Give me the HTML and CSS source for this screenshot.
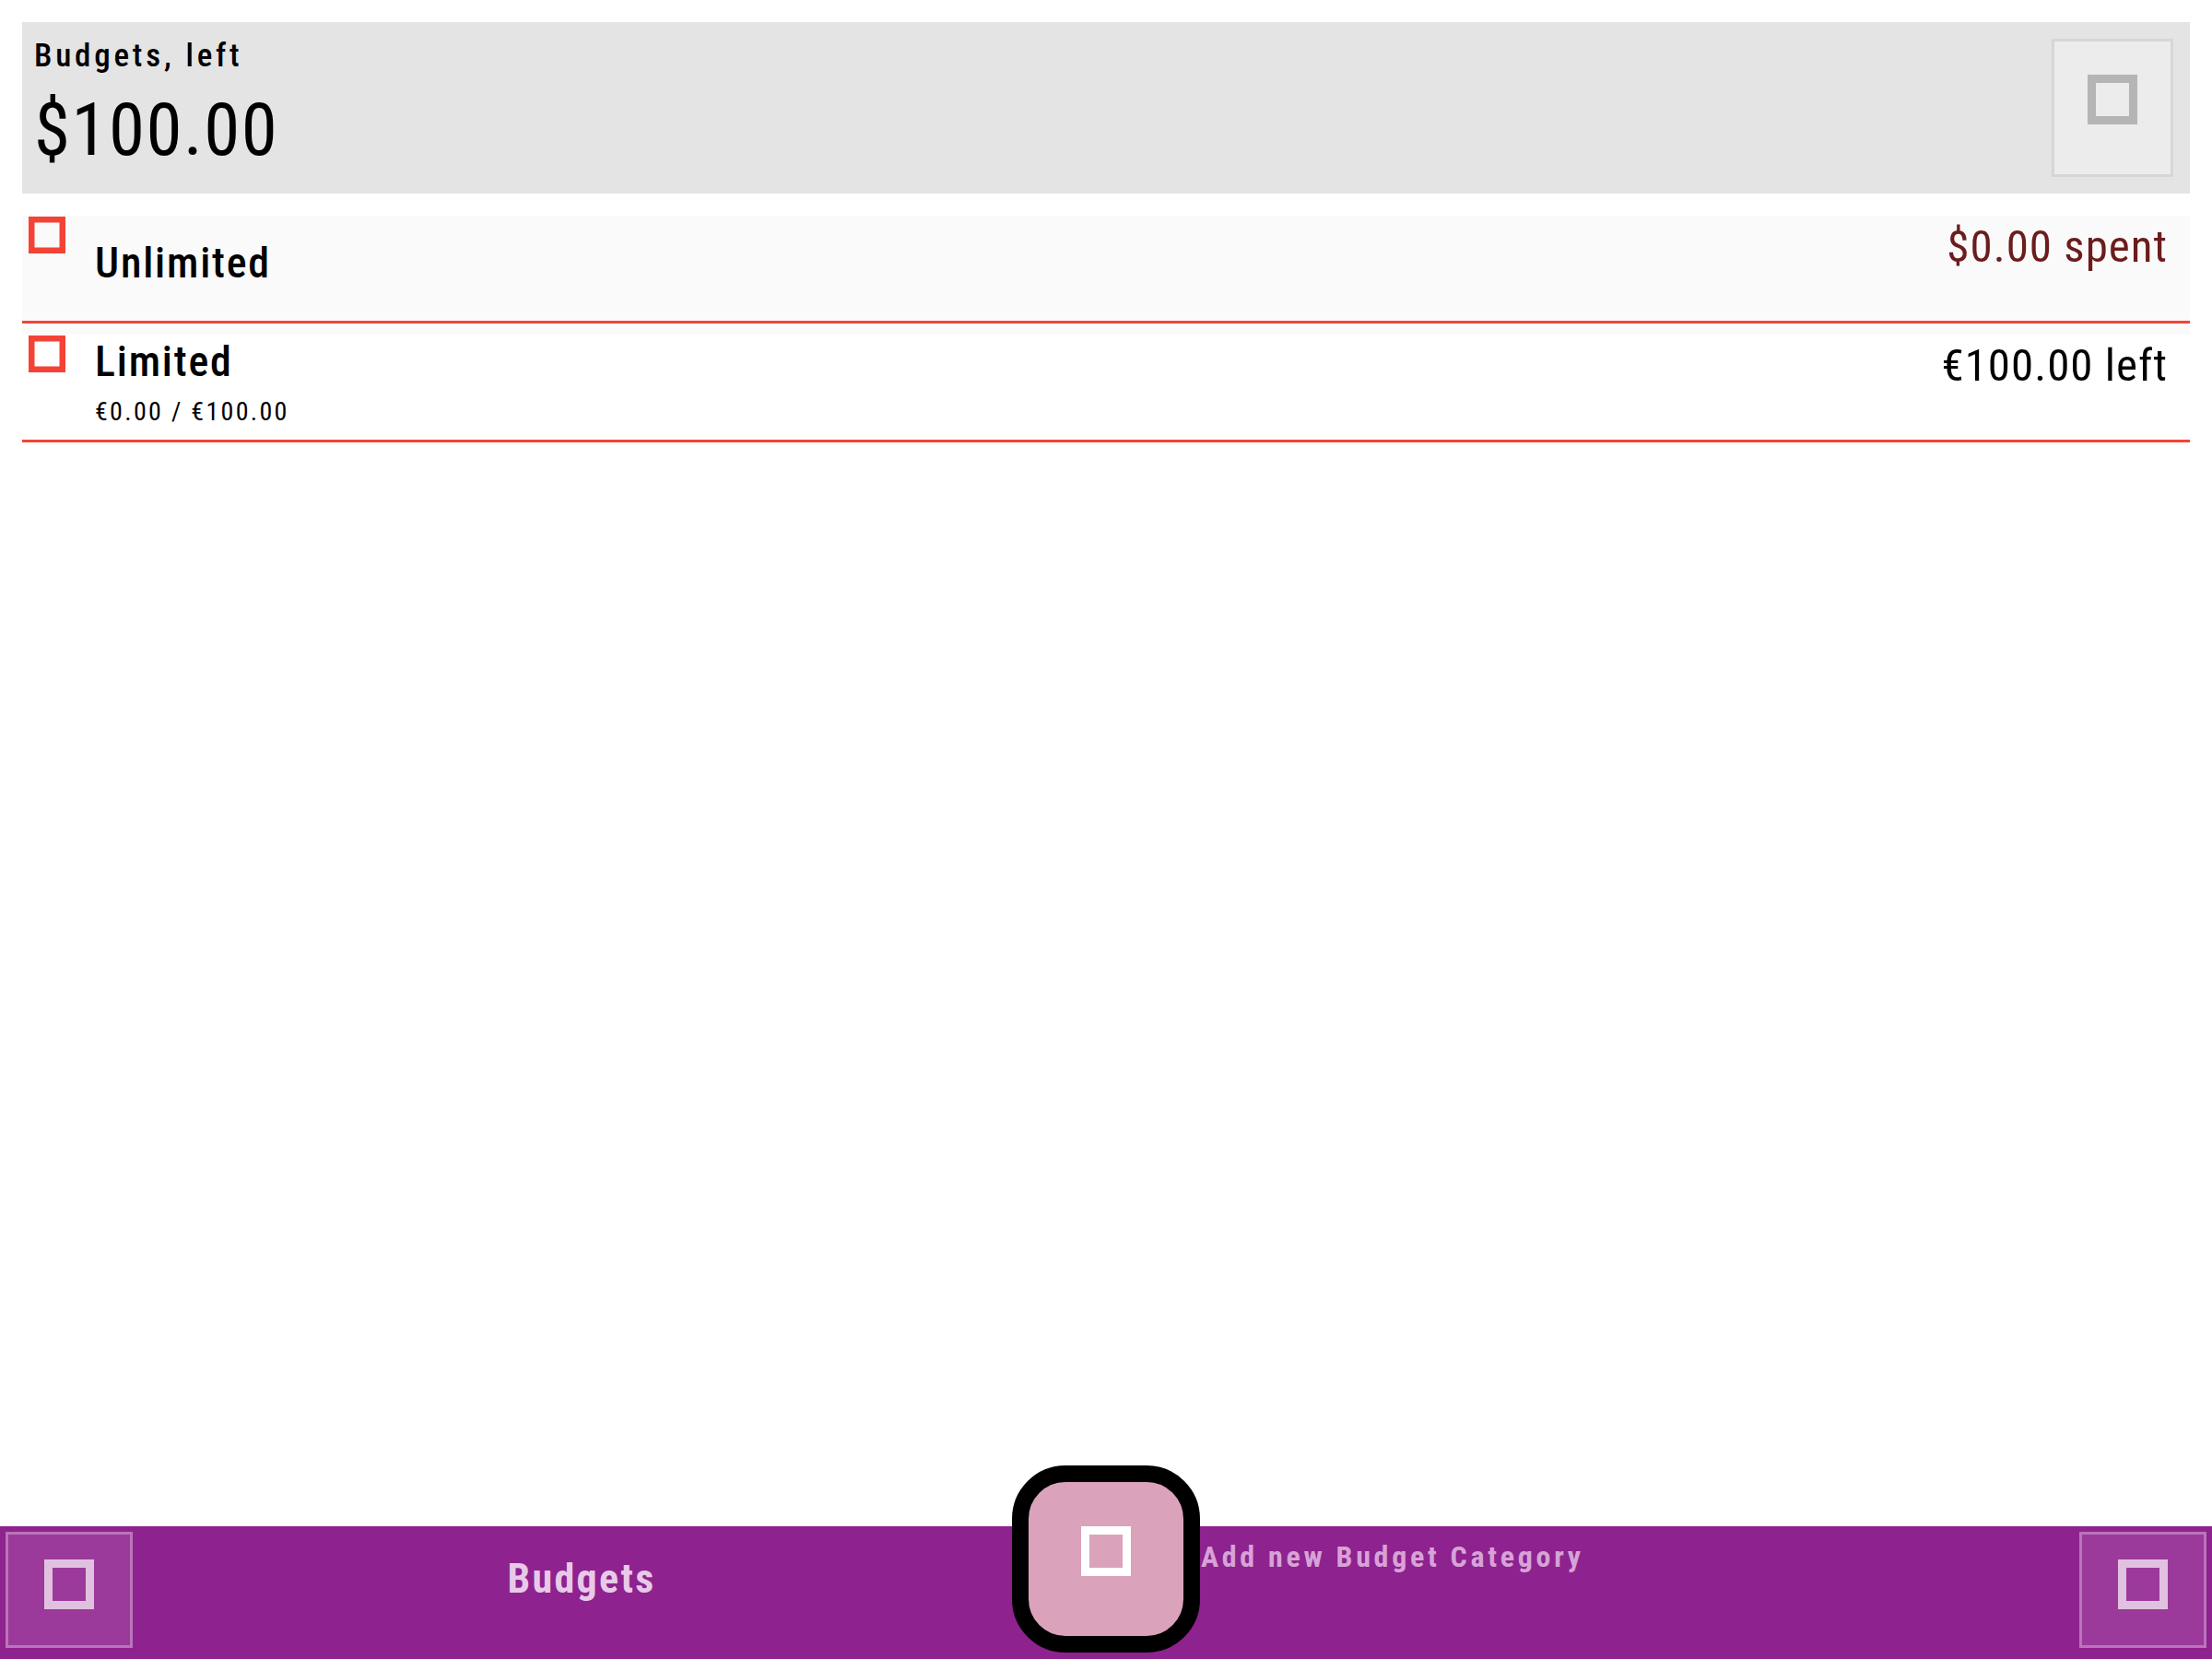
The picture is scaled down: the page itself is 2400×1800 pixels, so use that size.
FILE: index.html
```html
<!DOCTYPE html>
<html lang="en">
<head>
<meta charset="utf-8">
<title>Budgets</title>
<link rel="stylesheet" href="styles.css">
</head>
<body>
<div class="app">
  <main class="content">
    <section class="summary">
      <div class="summary-text">
        <div class="summary-label">Budgets, left</div>
        <div class="summary-amount">$100.00</div>
      </div>
      <button class="summary-btn" type="button" aria-label="Options">
        <svg class="icon" width="54" height="54" viewBox="0 0 54 54"><rect x="4.5" y="4.5" width="45" height="45" fill="none" stroke="currentColor" stroke-width="9"/></svg>
      </button>
    </section>

    <ul class="budget-list">
      <li class="budget budget--shaded">
        <div class="budget-inner">
          <svg class="check" width="40" height="40" viewBox="0 0 40 40"><rect x="3.25" y="3.25" width="33.5" height="33.5" fill="none" stroke="currentColor" stroke-width="6.5"/></svg>
          <div class="budget-info budget-info--single">
            <div class="budget-name">Unlimited</div>
          </div>
          <div class="budget-amount budget-amount--spent">$0.00 spent</div>
        </div>
      </li>
      <li class="budget">
        <div class="budget-inner">
          <svg class="check" width="40" height="40" viewBox="0 0 40 40"><rect x="3.25" y="3.25" width="33.5" height="33.5" fill="none" stroke="currentColor" stroke-width="6.5"/></svg>
          <div class="budget-info">
            <div class="budget-name">Limited</div>
            <div class="budget-sub">€0.00 / €100.00</div>
          </div>
          <div class="budget-amount">€100.00 left</div>
        </div>
      </li>
    </ul>
  </main>

  <nav class="bottom-bar">
    <button class="bar-btn" type="button" aria-label="Menu">
      <svg class="icon" width="54" height="54" viewBox="0 0 54 54"><rect x="4.5" y="4.5" width="45" height="45" fill="none" stroke="currentColor" stroke-width="9"/></svg>
    </button>
    <div class="bar-title">Budgets</div>
    <button class="fab" type="button" aria-label="Add new Budget Category">
      <svg class="icon" width="54" height="54" viewBox="0 0 54 54"><rect x="4.5" y="4.5" width="45" height="45" fill="none" stroke="currentColor" stroke-width="9"/></svg>
    </button>
    <div class="fab-label">Add new Budget Category</div>
    <button class="bar-btn" type="button" aria-label="More">
      <svg class="icon" width="54" height="54" viewBox="0 0 54 54"><rect x="4.5" y="4.5" width="45" height="45" fill="none" stroke="currentColor" stroke-width="9"/></svg>
    </button>
  </nav>
</div>
</body>
</html>
```

FILE: styles.css
```css
* {
  box-sizing: border-box;
}

html, body {
  margin: 0;
  padding: 0;
  background: #ffffff;
}

body {
  font-family: "Roboto Condensed", Roboto, "Liberation Sans", sans-serif;
  font-stretch: 75%;
  color: #000000;
}

button {
  font: inherit;
  margin: 0;
  cursor: pointer;
}

.icon {
  display: block;
}

.app {
  width: 2400px;
  height: 1800px;
  display: flex;
  flex-direction: column;
  overflow: hidden;
}

.content {
  flex: 1;
  padding: 24px 24px 0;
}

/* Summary header */
.summary {
  display: flex;
  align-items: flex-start;
  justify-content: space-between;
  background: #e4e4e4;
  padding: 18px 18px 18px 13px;
}

.summary-text {
  display: flex;
  flex-direction: column;
  margin-top: -2px;
}

.summary-label {
  font-size: 35px;
  font-weight: 500;
  letter-spacing: 3.8px;
  line-height: 41px;
}

.summary-amount {
  font-size: 79px;
  font-weight: 400;
  letter-spacing: 1.5px;
  line-height: 93px;
  margin-top: 14px;
}

.summary-btn {
  width: 132px;
  height: 150px;
  border: 3px solid #d6d6d6;
  background: #ececec;
  color: #b5b5b5;
  padding: 36px 0 0;
  display: flex;
  justify-content: center;
  align-items: flex-start;
}

/* Budget list */
.budget-list {
  list-style: none;
  margin: 24px 0 0;
  padding: 0;
}

.budget {
  padding-bottom: 12px;
  background: #ffffff;
}

.budget--shaded {
  background: #fafafa;
}

.budget-inner {
  display: flex;
  align-items: flex-start;
  min-height: 117px;
  border-bottom: 3px solid #f44336;
}

.check {
  flex-shrink: 0;
  display: block;
  color: #f44336;
  margin: 1px 0 0 7px;
}

.budget-info {
  flex: 1;
  margin-left: 32px;
  padding-top: 2px;
}

.budget-info--single {
  padding-top: 24px;
}

.budget-name {
  font-size: 46px;
  font-weight: 500;
  letter-spacing: 1.8px;
  line-height: 54px;
}

.budget-sub {
  font-size: 28px;
  letter-spacing: 2.3px;
  line-height: 33px;
  margin-top: 11px;
}

.budget-amount {
  font-size: 49px;
  letter-spacing: 1px;
  line-height: 57px;
  padding-top: 5px;
  margin-right: 24px;
  white-space: nowrap;
}

.budget-amount--spent {
  color: #6b1c1c;
}

/* Bottom bar */
.bottom-bar {
  height: 144px;
  flex-shrink: 0;
  display: flex;
  align-items: flex-start;
  background: #8e228e;
  padding: 6px 6px 12px;
}

.bar-btn {
  width: 138px;
  height: 126px;
  flex-shrink: 0;
  border: 3px solid #ba74ba;
  background: #9b3a9b;
  color: #e0c2e0;
  padding: 27px 0 0;
  display: flex;
  justify-content: center;
  align-items: flex-start;
}

.bar-title {
  flex: 1;
  text-align: center;
  text-indent: 20px;
  margin-top: 25px;
  font-size: 44px;
  font-weight: 700;
  letter-spacing: 2.3px;
  line-height: 52px;
  color: #e8c9e8;
}

.fab {
  width: 204px;
  height: 203px;
  flex-shrink: 0;
  margin-top: -72px;
  border: 18px solid #000000;
  border-radius: 58px;
  background: #dba3bb;
  color: #ffffff;
  padding: 48px 0 0;
  display: flex;
  justify-content: center;
  align-items: flex-start;
}

.fab-label {
  flex: 1;
  margin-top: 8px;
  text-indent: 1px;
  font-size: 32px;
  font-weight: 700;
  letter-spacing: 3.7px;
  line-height: 38px;
  color: #d7a2d7;
  white-space: nowrap;
}
```
